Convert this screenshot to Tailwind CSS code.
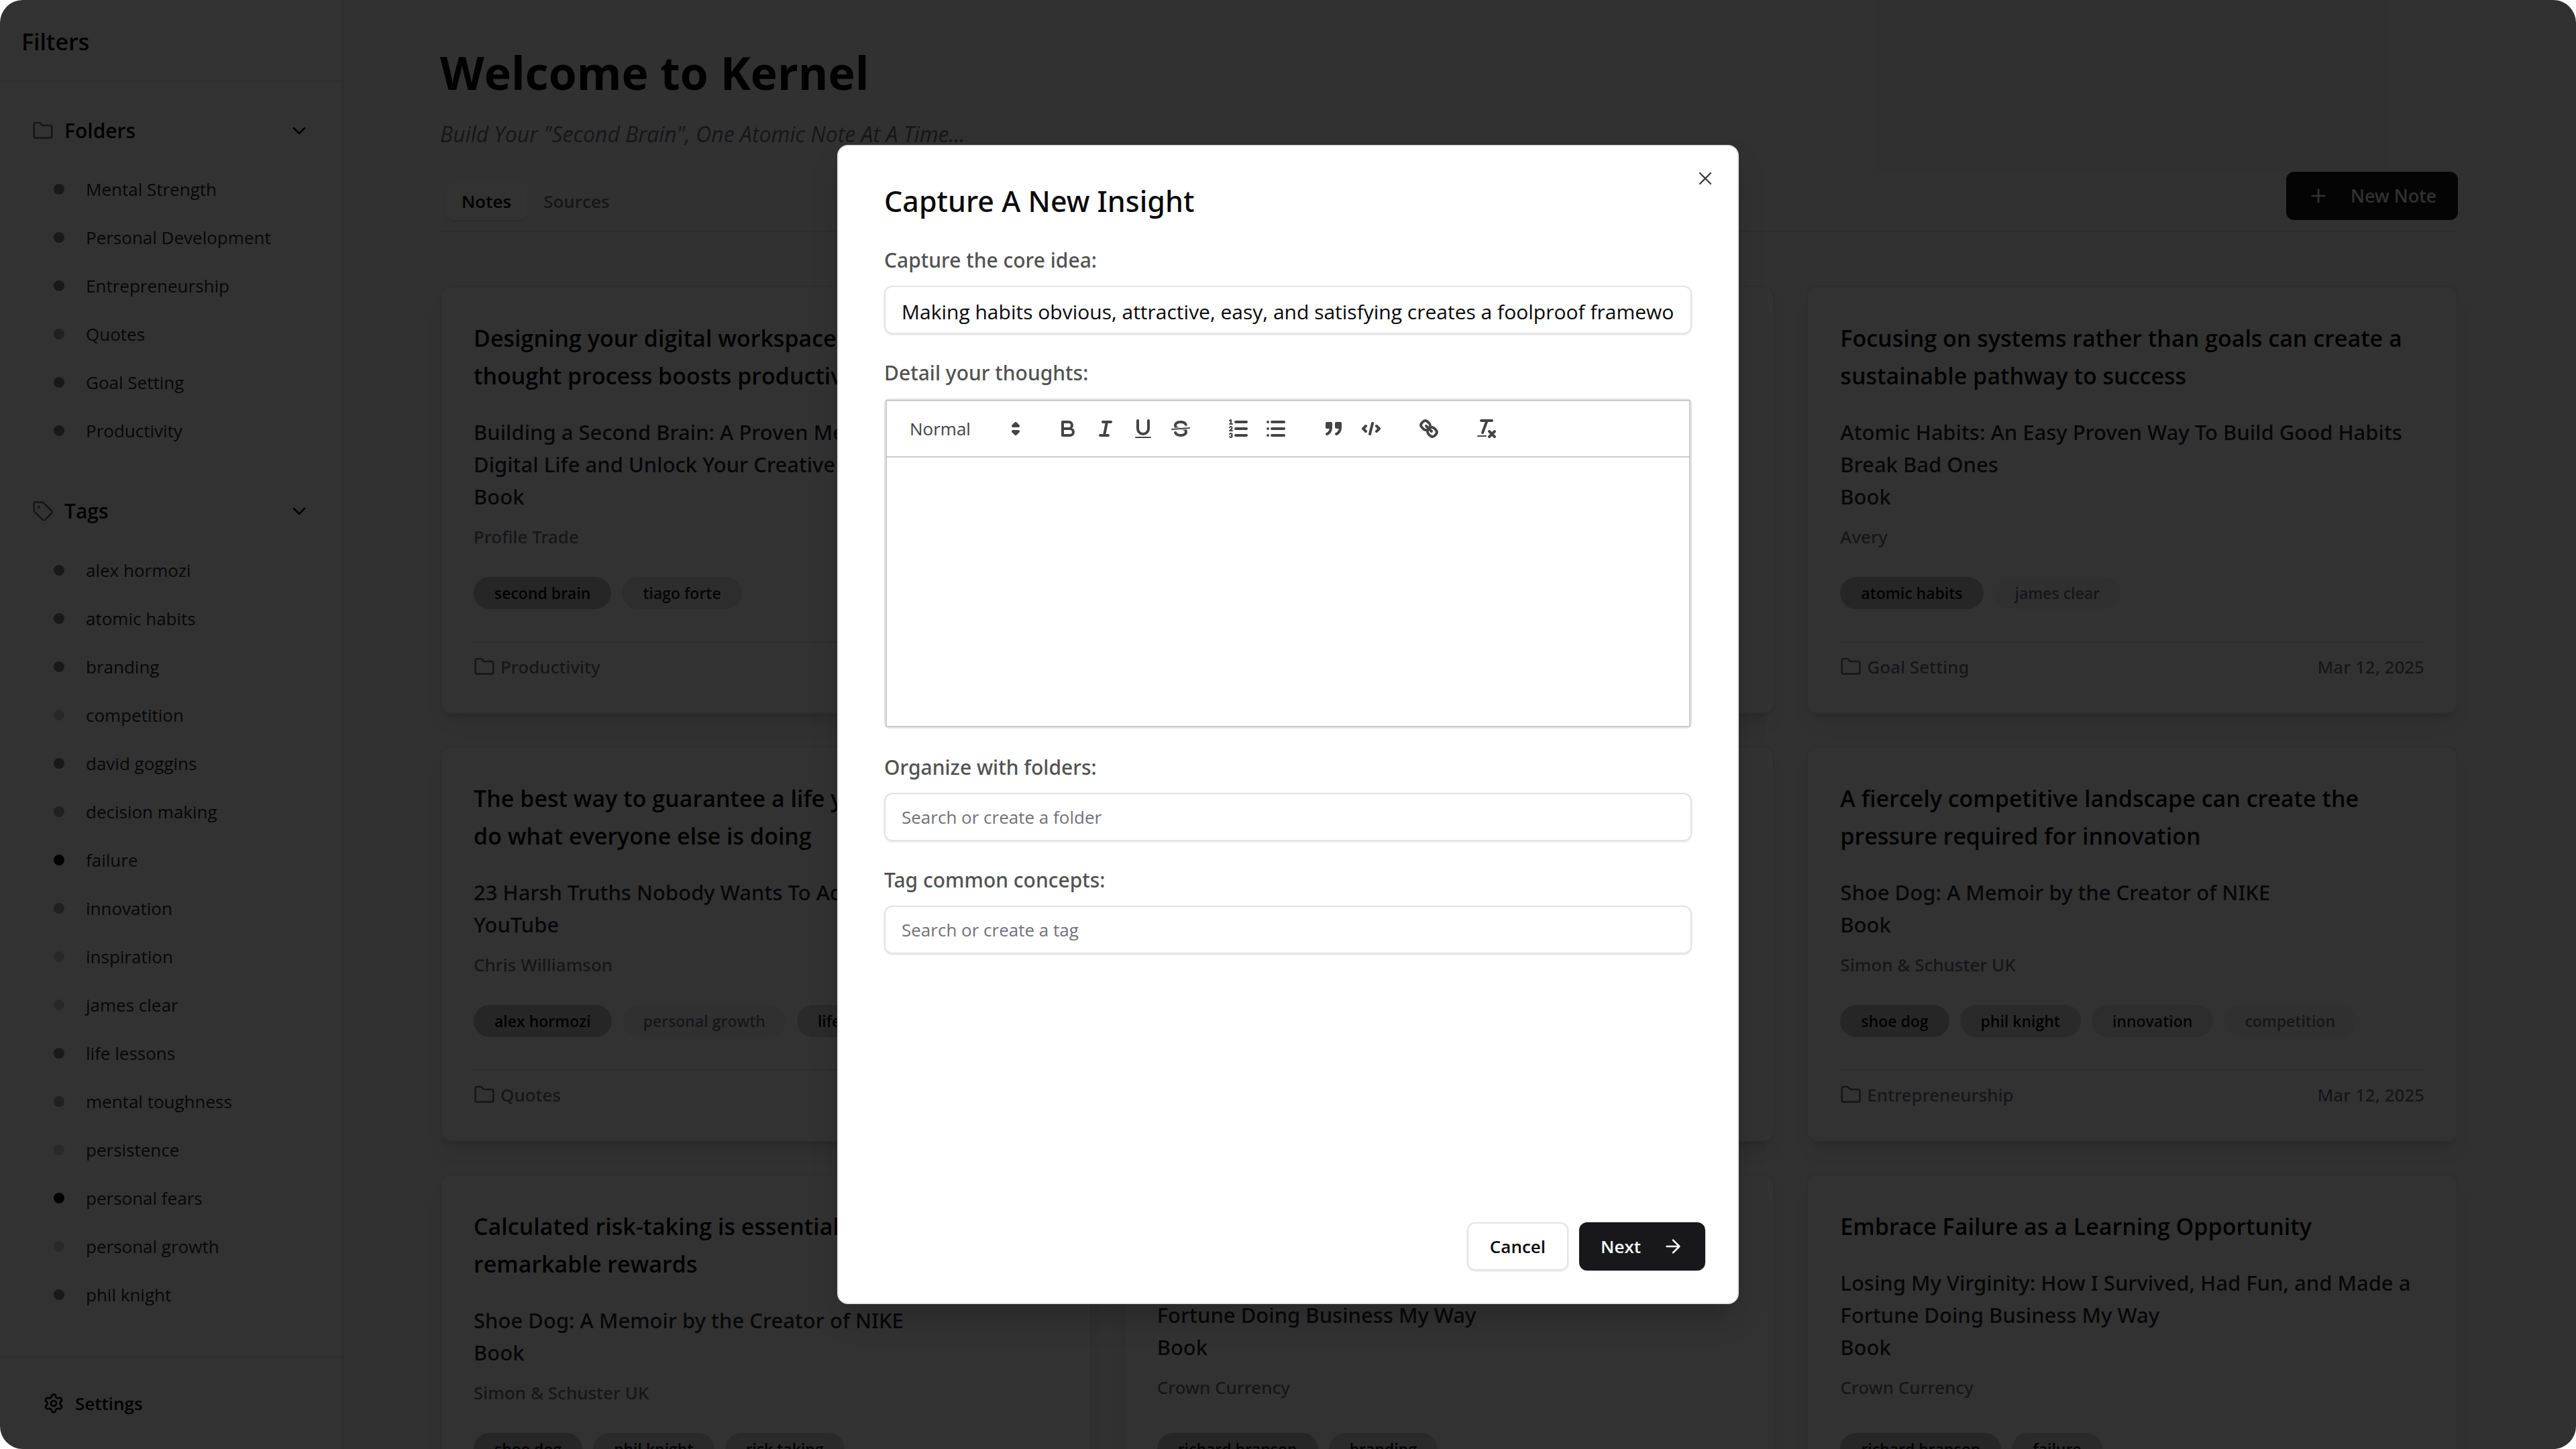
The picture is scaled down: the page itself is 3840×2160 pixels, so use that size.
<!DOCTYPE html>
<html lang="en">
<head>
  <meta charset="UTF-8" />
  <title>Kernel</title>
  <script src="https://cdn.jsdelivr.net/npm/@tailwindcss/browser@4"></script>
</head>
<body class="bg-white text-[26px] leading-10 text-zinc-950 font-['Open_Sans','Noto_Sans',sans-serif]">

  <!-- icons -->
  <svg class="hidden">
    <symbol id="i-folder" viewBox="0 0 24 24"><path d="M20 20a2 2 0 0 0 2-2V8a2 2 0 0 0-2-2h-7.9a2 2 0 0 1-1.69-.9L9.6 3.9A2 2 0 0 0 7.93 3H4a2 2 0 0 0-2 2v13a2 2 0 0 0 2 2Z"/></symbol>
    <symbol id="i-tag" viewBox="0 0 24 24"><path d="M12.586 2.586A2 2 0 0 0 11.172 2H4a2 2 0 0 0-2 2v7.172a2 2 0 0 0 .586 1.414l8.704 8.704a2.426 2.426 0 0 0 3.42 0l6.58-6.58a2.426 2.426 0 0 0 0-3.42z"/><circle cx="7.5" cy="7.5" r=".6" fill="currentColor"/></symbol>
    <symbol id="i-chevron" viewBox="0 0 24 24"><path d="m6 9 6 6 6-6"/></symbol>
    <symbol id="i-plus" viewBox="0 0 24 24"><path d="M5 12h14M12 5v14"/></symbol>
    <symbol id="i-x" viewBox="0 0 24 24"><path d="M18 6 6 18M6 6l12 12"/></symbol>
    <symbol id="i-arrow" viewBox="0 0 24 24"><path d="M5 12h14M12 5l7 7-7 7"/></symbol>
  </svg>

  <div class="relative h-screen flex overflow-hidden rounded-[34px] bg-[#f2f2f3]">

    <!-- Sidebar -->
    <aside class="w-[512px] shrink-0 flex flex-col bg-zinc-50 border-r-2 border-[#e0e0e2]">
      <div class="h-[122px] shrink-0 flex items-center px-8 pt-1 border-b-2 border-[#e0e0e2]">
        <h2 class="text-[34px] font-semibold">Filters</h2>
      </div>
      <nav class="flex-1 min-h-0 px-12 pt-[39px]">
        <button class="w-full h-[68px] flex items-center gap-4 text-left">
          <svg class="size-8 text-zinc-500 fill-none stroke-current stroke-2" stroke-linecap="round" stroke-linejoin="round"><use href="#i-folder"/></svg>
          <span class="flex-1 text-[30px] font-semibold">Folders</span>
          <svg class="size-8 fill-none stroke-current stroke-2" stroke-linecap="round" stroke-linejoin="round"><use href="#i-chevron"/></svg>
        </button>
        <ul id="folders" class="pt-[17px] pb-[50px]"></ul>
        <button class="w-full h-[68px] flex items-center gap-4 text-left">
          <svg class="size-8 text-zinc-500 fill-none stroke-current stroke-2" stroke-linecap="round" stroke-linejoin="round"><use href="#i-tag"/></svg>
          <span class="flex-1 text-[30px] font-semibold">Tags</span>
          <svg class="size-8 fill-none stroke-current stroke-2" stroke-linecap="round" stroke-linejoin="round"><use href="#i-chevron"/></svg>
        </button>
        <ul id="tags" class="pt-[18px]"></ul>
      </nav>
      <div class="h-[138px] shrink-0 flex items-center px-16 border-t-2 border-[#e0e0e2]">
        <button class="flex items-center gap-4 font-semibold">
          <svg class="size-8 fill-none stroke-current stroke-2" viewBox="0 0 24 24" stroke-linecap="round" stroke-linejoin="round"><path d="M9.67 4.14a2.34 2.34 0 0 1 4.66 0 2.34 2.34 0 0 0 3.32 1.91 2.34 2.34 0 0 1 2.33 4.03 2.34 2.34 0 0 0 0 3.84 2.34 2.34 0 0 1-2.33 4.03 2.34 2.34 0 0 0-3.32 1.91 2.34 2.34 0 0 1-4.66 0 2.34 2.34 0 0 0-3.32-1.91 2.34 2.34 0 0 1-2.33-4.03 2.34 2.34 0 0 0 0-3.84 2.34 2.34 0 0 1 2.33-4.03 2.34 2.34 0 0 0 3.32-1.91"/><circle cx="12" cy="12" r="3"/></svg>
          Settings
        </button>
      </div>
    </aside>

    <!-- Notes -->
    <main class="flex-1 min-w-0 pl-36 pr-[142px] pt-[68px]">
      <h1 class="text-[68px] leading-[80px] font-bold">Welcome to Kernel</h1>
      <p class="mt-7 text-[32px] leading-12 italic text-zinc-500">Build Your "Second Brain", One Atomic Note At A Time...</p>
      <div class="mt-8 pb-2 flex justify-between items-end border-b-2 border-[#e0e0e2]">
        <div class="h-[72px] flex items-center p-2 rounded-xl bg-[#f5f5f6] font-semibold">
          <button class="h-14 px-6 rounded-xl bg-zinc-50 shadow-md">Notes</button>
          <button class="h-14 px-6 text-zinc-500">Sources</button>
        </div>
        <button class="h-[72px] mb-2 px-8 flex items-center gap-8 rounded-xl bg-zinc-900 text-zinc-50 font-['Noto_Sans'] font-medium text-[27px]">
          <svg class="size-8 fill-none stroke-current stroke-2" stroke-linecap="round"><use href="#i-plus"/></svg>
          New Note
        </button>
      </div>
      <div id="notes" class="mt-20 grid grid-cols-3 gap-12"></div>
    </main>
    <div class="w-[34px] shrink-0 bg-[#f5f5f5]"></div>

    <!-- Dialog -->
    <div class="absolute inset-0 flex items-center justify-center bg-black/80">
      <form role="dialog" aria-labelledby="dialogTitle" class="relative w-[35vw] h-[80vh] flex flex-col p-12 rounded-2xl bg-white border-2 border-zinc-200 shadow-2xl">
        <button type="button" aria-label="Close" class="absolute top-8 right-8 text-neutral-700">
          <svg class="size-8 fill-none stroke-current stroke-[1.75]" stroke-linecap="round"><use href="#i-x"/></svg>
        </button>

        <div class="flex-1 min-h-0 px-5">
          <h2 id="dialogTitle" class="text-[43px] leading-[68px] font-['Noto_Sans'] font-medium">Capture A New Insight</h2>

          <label for="idea" class="block mt-[30px] text-[30px] leading-12 font-['Noto_Sans'] font-medium text-neutral-600">Capture the core idea:</label>
          <input id="idea" type="text" value="Making habits obvious, attractive, easy, and satisfying creates a foolproof framework for lasting change" class="block mt-3.5 w-full h-[72px] px-6 pt-1 text-[30px] rounded-xl border-2 border-zinc-200 shadow-sm" />

          <label for="detail" class="block mt-[34px] text-[30px] leading-12 font-['Noto_Sans'] font-medium text-neutral-600">Detail your thoughts:</label>
          <div class="mt-3.5 rounded-lg border-2 border-zinc-200">
            <div class="h-[86px] px-4 flex items-center gap-[30px] border-2 border-[#ccc] text-[#444]">
              <div class="relative w-[196px]">
                <select aria-label="Text style" class="w-full h-12 pl-[18px] appearance-none font-medium">
                  <option>Normal</option>
                </select>
                <svg class="absolute right-0.5 top-1.5 size-9 fill-current stroke-current stroke-2" viewBox="0 0 18 18" stroke-linecap="round" stroke-linejoin="round"><path d="M7 11l2 2 2-2zM7 7l2-2 2 2z"/></svg>
              </div>
              <div class="flex">
                <button type="button" aria-label="Bold" class="w-14 flex justify-center"><svg class="size-9 fill-none stroke-current stroke-2" viewBox="0 0 18 18" stroke-linejoin="round"><path d="M5 4h4.5a2.5 2.5 0 0 1 0 5H5zM5 9h5.500a2.500 2.500 0 0 1 0 5H5z"/></svg></button>
                <button type="button" aria-label="Italic" class="w-14 flex justify-center"><svg class="size-9 fill-none stroke-current stroke-2" viewBox="0 0 18 18" stroke-linecap="round"><path d="M7 4h6M5 14h6M8 14l2-10"/></svg></button>
                <button type="button" aria-label="Underline" class="w-14 flex justify-center"><svg class="size-9 fill-none stroke-current stroke-2" viewBox="0 0 18 18" stroke-linecap="round"><path d="M5 3v6a4 4 0 0 0 8 0V3"/><rect class="fill-current stroke-none" x="3" y="15" width="12" height="1" rx=".5"/></svg></button>
                <button type="button" aria-label="Strike" class="w-14 flex justify-center"><svg class="size-9 fill-current" viewBox="0 0 18 18"><path class="stroke-current stroke-1" stroke-linecap="round" d="M15.500 8.500l-13 1"/><path d="M9.007 8C6.542 7.791 6 7.519 6 6.500 6 5.792 7.283 5 9 5c1.571 0 2.765.679 2.969 1.309a1 1 0 0 0 1.900-.617C13.356 4.106 11.354 3 9 3 6.200 3 4 4.538 4 6.500a3.200 3.200 0 0 0 .5 1.843ZM8.984 10C11.457 10.208 12 10.479 12 11.500c0 .708-1.283 1.500-3 1.500-1.571 0-2.765-.679-2.969-1.309a1 1 0 1 0-1.900.617C4.644 13.894 6.646 15 9 15c2.800 0 5-1.538 5-3.500a3.200 3.200 0 0 0-.5-1.843Z"/></svg></button>
              </div>
              <div class="flex">
                <button type="button" aria-label="Numbered list" class="w-14 flex justify-center"><svg class="size-9 fill-none stroke-current" viewBox="0 0 18 18" stroke-linecap="round" stroke-linejoin="round"><path class="stroke-2" d="M7 4h8M7 9h8M7 14h8"/><path d="M2.500 5.500h2M4.500 10.500h-2c0-.234 1.850-1.076 1.850-2.234A.959.959 0 0 0 2.500 8.156M2.500 14.846a.959.959 0 0 0 1.850-.109A.7.7 0 0 0 3.750 14a.688.688 0 0 0 .6-.736.959.959 0 0 0-1.850-.109M2.500 3l1-.5v3"/></svg></button>
                <button type="button" aria-label="Bullet list" class="w-14 flex justify-center"><svg class="size-9 fill-none stroke-current stroke-2" viewBox="0 0 18 18" stroke-linecap="round"><path d="M6 4h9M6 9h9M6 14h9M3 4h0M3 9h0M3 14h0"/></svg></button>
              </div>
              <div class="flex">
                <button type="button" aria-label="Quote" class="w-14 flex justify-center"><svg class="size-9 fill-current stroke-current stroke-2" viewBox="0 0 18 18" stroke-linecap="round" stroke-linejoin="round"><path d="M4 5h3v3H4zM11 5h3v3h-3z"/><path d="M7 8c0 4.031-3 5-3 5M14 8c0 4.031-3 5-3 5"/></svg></button>
                <button type="button" aria-label="Code" class="w-14 flex justify-center"><svg class="size-9 fill-none stroke-current stroke-2" viewBox="0 0 18 18" stroke-linecap="round" stroke-linejoin="round"><path d="M5 7L3 9l2 2M13 7l2 2-2 2M10 5L8 13"/></svg></button>
              </div>
              <button type="button" aria-label="Link" class="w-14 flex justify-center"><svg class="size-9 fill-none stroke-current stroke-2" viewBox="0 0 18 18" stroke-linecap="round"><path d="M7 7l4 4M8.900 4.577a3.476 3.476 0 0 1 .36 4.679A3.476 3.476 0 0 1 4.577 8.900C3.185 7.500 2.035 6.400 4.217 4.217S7.500 3.185 8.900 4.577ZM13.423 9.100a3.476 3.476 0 0 0-4.679-.36 3.476 3.476 0 0 0 .36 4.679c1.392 1.392 2.500 2.542 4.679.36S14.815 10.500 13.423 9.100Z"/></svg></button>
              <button type="button" aria-label="Clear format" class="w-14 flex justify-center"><svg class="size-9 fill-none stroke-current stroke-2" viewBox="0 0 18 18" stroke-linecap="round"><path d="M5 3h8M6 12L9.350 3M11 11l4 4M15 11l-4 4"/><rect class="fill-current stroke-none" x="2" y="14" width="7" height="1" rx=".5"/></svg></button>
            </div>
            <textarea id="detail" class="block w-full h-[402px] p-6 resize-none border-2 border-t-0 border-[#ccc]"></textarea>
          </div>

          <label for="folder" class="block mt-[34px] text-[30px] leading-12 font-['Noto_Sans'] font-medium text-neutral-600">Organize with folders:</label>
          <input id="folder" type="text" placeholder="Search or create a folder" class="block mt-3.5 w-full h-[72px] px-6 rounded-xl border-2 border-zinc-200 shadow-sm placeholder:text-zinc-500" />

          <label for="tag" class="block mt-[34px] text-[30px] leading-12 font-['Noto_Sans'] font-medium text-neutral-600">Tag common concepts:</label>
          <input id="tag" type="text" placeholder="Search or create a tag" class="block mt-3.5 w-full h-[72px] px-6 rounded-xl border-2 border-zinc-200 shadow-sm placeholder:text-zinc-500" />
        </div>

        <div class="flex justify-end gap-4 font-semibold">
          <button type="button" class="h-[72px] px-8 rounded-xl border-2 border-zinc-200 shadow-sm">Cancel</button>
          <button type="submit" class="h-[72px] px-8 flex items-center gap-8 rounded-xl bg-zinc-900 text-zinc-50 shadow">
            Next
            <svg class="size-8 fill-none stroke-current stroke-2" stroke-linecap="round" stroke-linejoin="round"><use href="#i-arrow"/></svg>
          </button>
        </div>
      </form>
    </div>
  </div>

  <script>
    const dots = {
      low: 'bg-[#cacaca]',
      mid: 'bg-[#a0a0a5]',
      high: 'bg-[#7c7c84]',
      top: 'bg-zinc-950'
    };
    const badges = {
      low: 'bg-[#f1f1f2] text-zinc-500',
      mid: 'bg-[#e0e0e2] text-zinc-900',
      high: 'bg-[#d2d2d4] text-zinc-950',
      top: 'bg-[#bfbfc2] text-zinc-950'
    };

    const folders = [
      ['Mental Strength', 'high'], ['Personal Development', 'high'], ['Entrepreneurship', 'high'],
      ['Quotes', 'mid'], ['Goal Setting', 'high'], ['Productivity', 'high']
    ];
    const tags = [
      ['alex hormozi', 'high'], ['atomic habits', 'high'], ['branding', 'high'], ['competition', 'low'],
      ['david goggins', 'high'], ['decision making', 'mid'], ['failure', 'top'], ['innovation', 'mid'],
      ['inspiration', 'low'], ['james clear', 'low'], ['life lessons', 'high'], ['mental toughness', 'mid'],
      ['persistence', 'low'], ['personal fears', 'top'], ['personal growth', 'low'], ['phil knight', 'high']
    ];

    const virginity = 'Losing My Virginity: How I Survived, Had Fun, and Made a<br>Fortune Doing Business My Way';
    const shoeDog = 'Shoe Dog: A Memoir by the Creator of NIKE';
    const notes = [
      { title: 'Designing your digital workspace to mirror your<br>thought process boosts productivity', source: 'Building a Second Brain: A Proven Method to Organise<br>Digital Life and Unlock Your Creative Potential', type: 'Book', author: 'Profile Trade', tags: [['second brain', 'top'], ['tiago forte', 'mid']], folder: 'Productivity', date: 'Mar 12, 2025' },
      { title: 'Small daily improvements lead to<br>remarkable results', source: 'Atomic Habits: An Easy Proven Way To Build Good<br>Break Bad Ones', type: 'Book', author: 'Avery', tags: [['atomic habits', 'top']], folder: 'Goal Setting', date: '' },
      { title: 'Focusing on systems rather than goals can create a<br>sustainable pathway to success', source: 'Atomic Habits: An Easy Proven Way To Build Good Habits<br>Break Bad Ones', type: 'Book', author: 'Avery', tags: [['atomic habits', 'top'], ['james clear', 'low']], folder: 'Goal Setting', date: 'Mar 12, 2025' },
      { title: 'The best way to guarantee a life you hate is to<br>do what everyone else is doing', source: '23 Harsh Truths Nobody Wants To Admit', type: 'YouTube', author: 'Chris Williamson', tags: [['alex hormozi', 'top'], ['personal growth', 'low'], ['life lessons', 'high']], folder: 'Quotes', date: 'Mar 12, 2025' },
      { title: 'Facing your fears builds<br>a stronger mind', source: shoeDog, type: 'Book', author: 'Simon &amp; Schuster UK', tags: [['shoe dog', 'top']], folder: 'Mental Strength', date: '' },
      { title: 'A fiercely competitive landscape can create the<br>pressure required for innovation', source: shoeDog, type: 'Book', author: 'Simon &amp; Schuster UK', tags: [['shoe dog', 'top'], ['phil knight', 'high'], ['innovation', 'mid'], ['competition', 'low']], folder: 'Entrepreneurship', date: 'Mar 12, 2025' },
      { title: 'Calculated risk-taking is essential to achieve<br>remarkable rewards', source: shoeDog, type: 'Book', author: 'Simon &amp; Schuster UK', tags: [['shoe dog', 'top'], ['phil knight', 'high'], ['risk taking', 'high']], folder: 'Entrepreneurship', date: 'Mar 12, 2025' },
      { title: 'Build a Brand People Love', source: virginity, type: 'Book', author: 'Crown Currency', tags: [['richard branson', 'top'], ['branding', 'high']], folder: 'Entrepreneurship', date: 'Mar 12, 2025' },
      { title: 'Embrace Failure as a Learning Opportunity', source: virginity, type: 'Book', author: 'Crown Currency', tags: [['richard branson', 'top'], ['failure', 'high']], folder: 'Entrepreneurship', date: 'Mar 12, 2025' }
    ];

    const filterRow = ([name, level]) => `
      <li><a href="#" class="h-[72px] pl-8 flex items-center gap-8 text-zinc-800">
        <span class="size-4 rounded-full ${dots[level]}"></span>${name}
      </a></li>`;
    document.getElementById('folders').innerHTML = folders.map(filterRow).join('');
    document.getElementById('tags').innerHTML = tags.map(filterRow).join('');

    // tags and footer stick to the bottom of the card
    document.getElementById('notes').innerHTML = notes.map(n => `
      <article class="flex flex-col p-12 rounded-2xl border-2 border-[#e4e4e7] bg-zinc-50 shadow-[0_20px_30px_-10px_rgb(0_0_0/0.1),0_8px_12px_-8px_rgb(0_0_0/0.2)]">
        <h3 class="text-[34px] leading-14 font-semibold whitespace-nowrap">${n.title}</h3>
        <p class="mt-8 text-[31px] leading-12 font-['Noto_Sans'] font-medium text-zinc-800 whitespace-nowrap">${n.source}<br>${n.type}</p>
        <p class="mt-4 font-['Noto_Sans'] font-medium text-zinc-500">${n.author}</p>
        <div class="mt-auto pt-10 flex gap-4">
          ${n.tags.map(([t, level]) => `<span class="h-12 px-[31px] flex items-center rounded-full text-[23px] leading-8 font-semibold ${badges[level]}">${t}</span>`).join('')}
        </div>
        <div class="mt-12 pt-4 flex justify-between border-t-2 border-[#e0e0e2] font-['Noto_Sans'] font-medium text-zinc-500">
          <span class="flex items-center gap-2">
            <svg class="size-8 fill-none stroke-current stroke-2" stroke-linecap="round" stroke-linejoin="round"><use href="#i-folder"/></svg>${n.folder}
          </span>
          <time>${n.date}</time>
        </div>
      </article>`).join('');
  </script>
</body>
</html>
